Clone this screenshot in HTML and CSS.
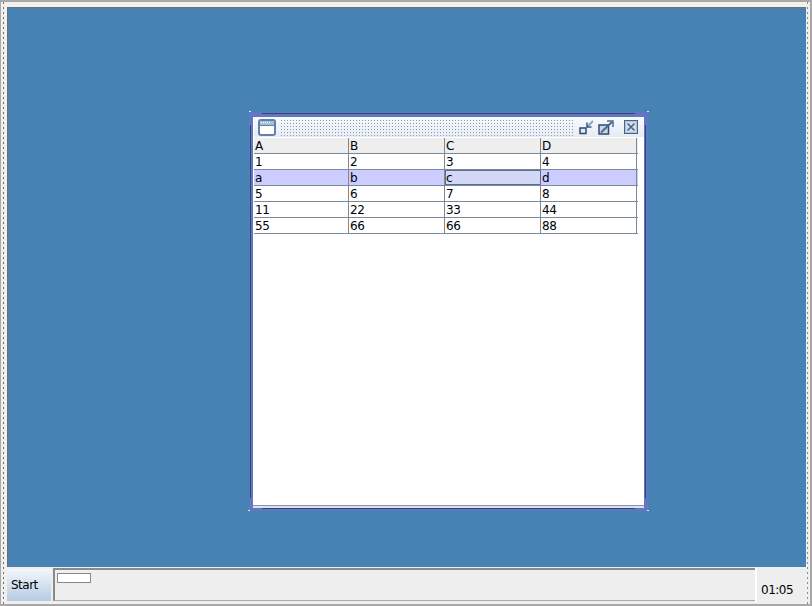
FILE: index.html
```html
<!DOCTYPE html>
<html lang="en">
<head>
<meta charset="utf-8">
<title>Desktop</title>
<link rel="stylesheet" href="styles.css">
</head>
<body>
<div class="frame">
  <main class="desktop">
    <section class="window">
      <span class="grip gtl"></span><span class="grip gtr"></span><span class="grip gbl"></span><span class="grip gbr"></span>
      <span class="edge etop"></span><span class="edge ebottom"></span><span class="edge eleft"></span><span class="edge eright"></span>
      <span class="corner tl"></span><span class="corner tr"></span><span class="corner bl"></span><span class="corner br"></span>
      <div class="inner">
        <header class="titlebar">
          <svg class="appicon" width="18" height="17" viewBox="0 0 18 17">
            <rect x="1" y="1" width="16" height="15" rx="2" fill="#fff" stroke="#5f82ac" stroke-width="2"/>
            <rect x="2" y="2" width="14" height="4" fill="#a9bfd8"/>
            <path d="M3 3.500h1M5 3.500h1M7 3.500h1M9 3.500h1M11 3.500h1" stroke="#fff" stroke-width="1"/>
            <path d="M1 6.500h16" stroke="#5f82ac" stroke-width="1"/>
          </svg>
          <div class="dots"></div>
          <div class="controls">
            <svg class="min" width="15" height="15" viewBox="0 0 15 15">
              <rect x="1" y="8" width="6" height="5.500" fill="#e3e9f2" stroke="#2f4a70" stroke-width="1.500"/>
              <path d="M14 1L8 7" stroke="#8aa2c0" stroke-width="2"/>
              <path d="M8 2.500V7H12.500" fill="none" stroke="#3f5b82" stroke-width="1.500"/>
            </svg>
            <svg class="max" width="16" height="15" viewBox="0 0 16 15">
              <rect x="1" y="5" width="9.500" height="9" fill="#cdd8e6" stroke="#2f4a70" stroke-width="1.500"/>
              <path d="M3 12.500L14 2" stroke="#4a6b92" stroke-width="2"/>
              <path d="M9 1H15V7" fill="none" stroke="#4a6b92" stroke-width="1.500"/>
            </svg>
            <svg class="close" width="14" height="14" viewBox="0 0 14 14">
              <rect x="0.500" y="0.500" width="13" height="13" fill="#b3c2d6" stroke="#46658c"/>
              <rect x="2" y="2" width="10" height="10" fill="#d3dde9"/>
              <path d="M3.500 3.500L10.500 10.500M10.500 3.500L3.500 10.500" stroke="#46658c" stroke-width="1.600"/>
            </svg>
          </div>
        </header>
        <div class="table">
          <div class="row head"><div class="cell">A</div><div class="cell">B</div><div class="cell">C</div><div class="cell">D</div></div>
          <div class="row"><div class="cell">1</div><div class="cell">2</div><div class="cell">3</div><div class="cell">4</div></div>
          <div class="row selected"><div class="cell">a</div><div class="cell">b</div><div class="cell focus">c</div><div class="cell">d</div></div>
          <div class="row"><div class="cell">5</div><div class="cell">6</div><div class="cell">7</div><div class="cell">8</div></div>
          <div class="row"><div class="cell">11</div><div class="cell">22</div><div class="cell">33</div><div class="cell">44</div></div>
          <div class="row"><div class="cell">55</div><div class="cell">66</div><div class="cell">66</div><div class="cell">88</div></div>
        </div>
      </div>
    </section>
  </main>
  <footer class="taskbar">
    <button class="start">Start</button>
    <div class="tasks"><div class="taskitem"></div></div>
    <div class="clock">01:05</div>
  </footer>
</div>
</body>
</html>
```
FILE: styles.css
```css
* { box-sizing: border-box; }
html, body { margin: 0; height: 100%; }
body {
  width: 812px;
  height: 606px;
  overflow: hidden;
  font: 12px "DejaVu Sans", sans-serif;
  letter-spacing: -0.5px;
  color: #000;
  background: #eeeeee;
}
.frame {
  width: 812px;
  height: 606px;
  display: flex;
  flex-direction: column;
  border: 2px solid #a8a8a8;
  border-width: 2px 2px 2px 1px;
  padding: 5px 4px 2px 6px;
  background-color: #f0f0ee;
  background-image:
    repeating-linear-gradient(#6f6f6f 0 2px, transparent 2px 5px),
    repeating-linear-gradient(#8a8a8a 0 2px, transparent 2px 5px);
  background-size: 1px 100%, 1px 100%;
  background-position: 2px 0, 806px 0;
  background-repeat: no-repeat;
}
.desktop {
  position: relative;
  flex: 1;
  background: #4682b4;
  border-top: 1px solid #6f6f6f;
  border-left: 1px solid #6f6f6f;
}
.window {
  position: absolute;
  left: 241px;
  top: 104px;
  width: 399px;
  height: 399px;
  padding: 5px 4px;
  background: #5f79c0;
}
.grip { position: absolute; width: 14px; height: 14px; background: #6475c4; }
.gtl { left: 0; top: 0; }
.gtr { right: 0; top: 0; }
.gbl { left: 0; bottom: 0; }
.gbr { right: 0; bottom: 0; }
.edge { position: absolute; background: #33466f; }
.etop { left: 13px; right: 13px; top: 1px; height: 1px; }
.ebottom { left: 13px; right: 13px; bottom: 2px; height: 1px; }
.eleft { top: 13px; bottom: 13px; left: 1px; width: 1px; }
.eright { top: 13px; bottom: 13px; right: 2px; width: 1px; }
.corner { position: absolute; width: 2px; height: 1px; background: #e3e8f6; }
.tl { left: 0; top: -1px; }
.tr { right: -1px; top: -1px; }
.bl { left: -1px; bottom: 0; }
.br { right: -1px; bottom: 0; }
.inner {
  position: relative;
  height: 100%;
  background: #fff;
  border-bottom: 1px solid #8a94a8;
  box-shadow: 0 2px 0 #d9e1f2;
  display: flex;
  flex-direction: column;
  padding: 0 0 0 1px;
}
.titlebar {
  height: 20px;
  display: flex;
  align-items: center;
  padding: 0 6px 0 4px;
  flex: none;
  background: linear-gradient(#f8fafd, #e6ecf5);
}
.appicon { flex: none; }
.dots {
  flex: 1;
  height: 17px;
  margin: 0 4px 0 4px;
  background-image: radial-gradient(#8d99ad 0.8px, transparent 0.9px);
  background-size: 3px 3px;
}
.controls { display: flex; align-items: center; gap: 4px; }
.controls .close { margin-left: 6px; }
.table { flex: none; padding-top: 1px; }
.row {
  display: grid;
  grid-template-columns: 95px repeat(3, 96px);
  width: 384px;
  height: 16px;
  border-bottom: 1px solid #7b8a99;
}
.cell {
  border-right: 1px solid #7b8a99;
  padding: 1px 0 0 1px;
  line-height: 15px;
  height: 15px;
  white-space: nowrap;
}
.head { background: #eeeeee; }
.selected { background: #ccccff; }
.focus { outline: 1px solid #5a6f96; outline-offset: -1px; background: #d4d8f6; }
.taskbar {
  flex: none;
  height: 35px;
  display: flex;
  background: #eeeeee;
  padding-top: 1px;
}
.start {
  width: 44px;
  height: 32px;
  margin: 1px 0 0;
  border: 0;
  padding: 0 0 0 4px;
  text-align: left;
  font: inherit;
  letter-spacing: inherit;
  color: #000;
  background: linear-gradient(#f4f7fb, #b4cbe3);
}
.tasks {
  flex: 1;
  margin: 0 0 1px 2px;
  padding: 3px 0 0 2px;
  border-top: 2px solid #8a8a8a;
  border-left: 2px solid #8a8a8a;
  border-bottom: 1px solid #ababab;
}
.taskitem {
  width: 34px;
  height: 10px;
  border: 1px solid #7d8a96;
  background: #fff;
}
.clock {
  width: 51px;
  flex: none;
  border-left: 2px solid #fff;
  padding: 13px 0 0 4px;
  line-height: 18px;
}
```
